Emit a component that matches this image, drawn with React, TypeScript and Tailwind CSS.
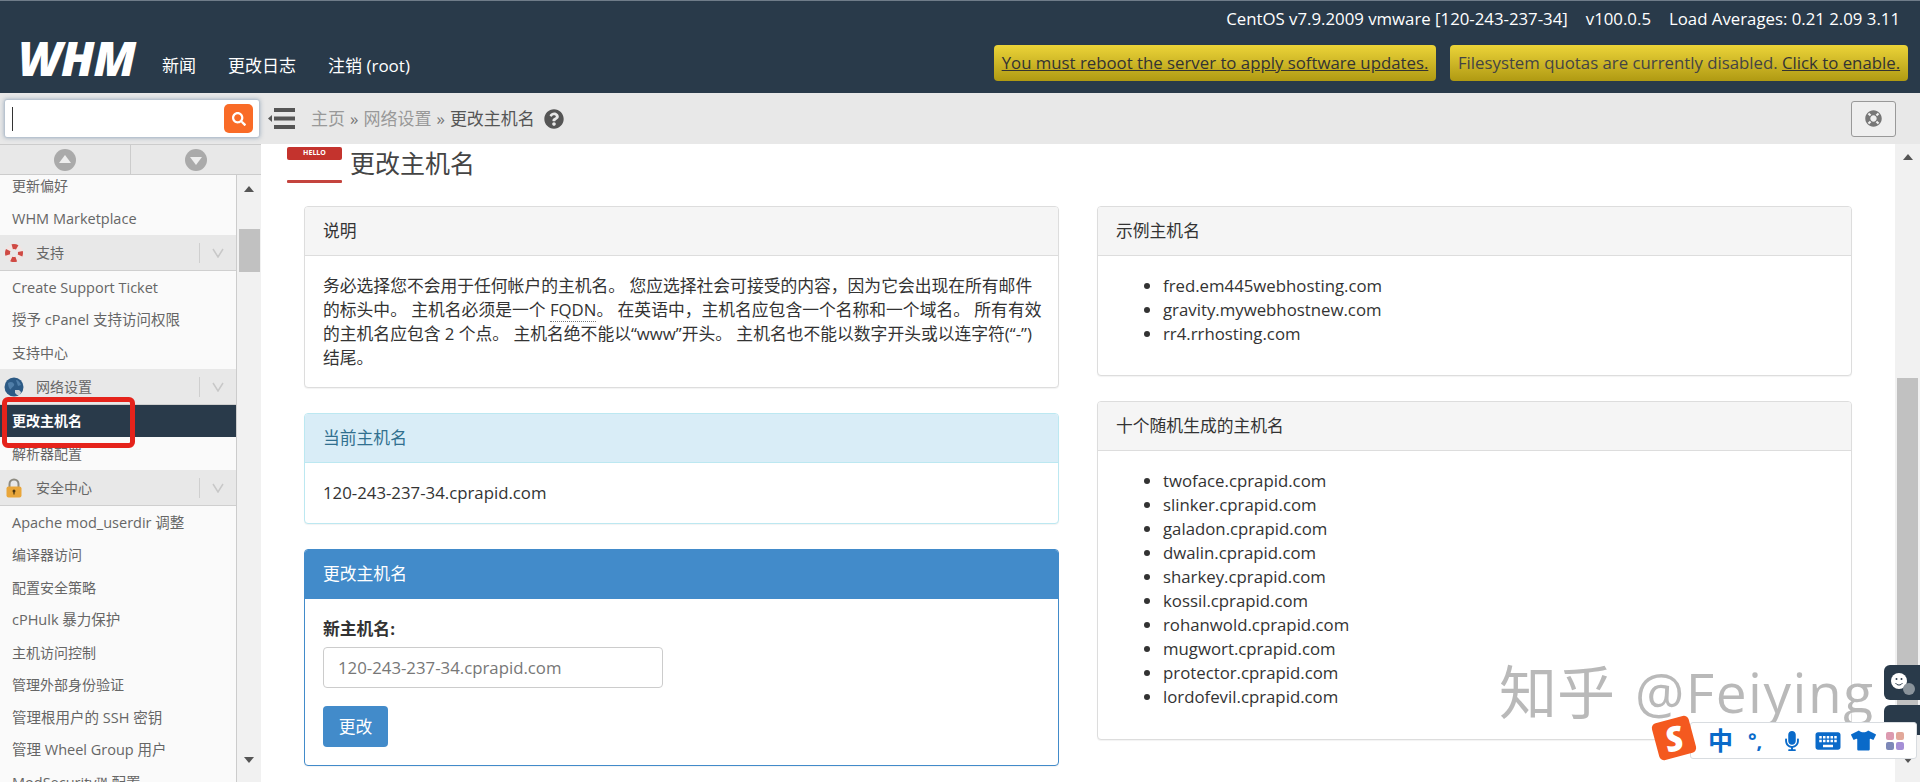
import React from "react";
import { FaMicrophone, FaQuestionCircle, FaTshirt, FaLifeRing, FaSearch } from "react-icons/fa";
import { MdKeyboard } from "react-icons/md";

interface SideRow {
  label: string;
  kind: "item" | "group" | "active";
  icon?: "support" | "network" | "lock";
}

const sideRows: SideRow[] = [
  { label: "更新偏好", kind: "item" },
  { label: "WHM Marketplace", kind: "item" },
  { label: "支持", kind: "group", icon: "support" },
  { label: "Create Support Ticket", kind: "item" },
  { label: "授予 cPanel 支持访问权限", kind: "item" },
  { label: "支持中心", kind: "item" },
  { label: "网络设置", kind: "group", icon: "network" },
  { label: "更改主机名", kind: "active" },
  { label: "解析器配置", kind: "item" },
  { label: "安全中心", kind: "group", icon: "lock" },
  { label: "Apache mod_userdir 调整", kind: "item" },
  { label: "编译器访问", kind: "item" },
  { label: "配置安全策略", kind: "item" },
  { label: "cPHulk 暴力保护", kind: "item" },
  { label: "主机访问控制", kind: "item" },
  { label: "管理外部身份验证", kind: "item" },
  { label: "管理根用户的 SSH 密钥", kind: "item" },
  { label: "管理 Wheel Group 用户", kind: "item" },
  { label: "ModSecurity™ 配置", kind: "item" },
];

const exampleHosts = ["fred.em445webhosting.com", "gravity.mywebhostnew.com", "rr4.rrhosting.com"];
const randomHosts = [
  "twoface.cprapid.com",
  "slinker.cprapid.com",
  "galadon.cprapid.com",
  "dwalin.cprapid.com",
  "sharkey.cprapid.com",
  "kossil.cprapid.com",
  "rohanwold.cprapid.com",
  "mugwort.cprapid.com",
  "protector.cprapid.com",
  "lordofevil.cprapid.com",
];

const GroupIcon = ({ name }: { name?: SideRow["icon"] }) => {
  if (name === "support") {
    return (
      <svg viewBox="0 0 20 20" className="w-[20px] h-[20px]">
        <circle cx="10" cy="10" r="6.5" fill="none" stroke="#f3e4e2" strokeWidth="5" />
        <circle cx="10" cy="10" r="6.5" fill="none" stroke="#cf4a44" strokeWidth="5" strokeDasharray="5.2 5" strokeDashoffset="2.6" />
      </svg>
    );
  }
  if (name === "network") {
    return (
      <svg viewBox="0 0 20 20" className="w-[20px] h-[20px]">
        <circle cx="10" cy="10" r="9.5" fill="#2c5a85" />
        <path d="M4 6c3-2 5-1 6 1s-2 3-3 5-3-3-3-6zM12 3c2 0 4 2 5 5l-3 1z" fill="#4f7ea8" />
        <path d="M11 13l4 0 2 2-1 3-3 0-2-2z" fill="#c9ced3" />
      </svg>
    );
  }
  return (
    <svg viewBox="0 0 20 20" className="w-[20px] h-[20px]">
      <path d="M5.5 9V6a4.5 4.5 0 0 1 9 0v3" fill="none" stroke="#8d8a80" strokeWidth="2" />
      <rect x="2.5" y="8.5" width="15" height="11" rx="2" fill="#e9a63a" />
      <circle cx="10" cy="13" r="1.5" fill="#4a3510" />
      <rect x="9.4" y="13" width="1.2" height="3.5" fill="#4a3510" />
    </svg>
  );
};

const SideRowView = ({ row }: { row: SideRow }) => {
  if (row.kind === "group") {
    return (
      <div className="h-[36.5px] shrink-0 flex items-center bg-[#e8e8e8] border-b border-[#cfcfcf] text-[#666] text-[14px]">
        <div className="w-[36px] pl-[4px]">
          <GroupIcon name={row.icon} />
        </div>
        <span className="flex-1">{row.label}</span>
        <div className="w-[1px] h-[20px] bg-[#cfcfcf]" />
        <svg viewBox="0 0 12 10" className="w-[12px] h-[10px] mx-[12px]">
          <polyline points="1,1 6,9 11,1" fill="none" stroke="#c8c8c8" strokeWidth="1.5" />
        </svg>
      </div>
    );
  }
  if (row.kind === "active") {
    return (
      <div className="h-[32px] shrink-0 flex items-center pl-[12px] bg-[#293a4a] text-white font-semibold text-[14px]">
        {row.label}
      </div>
    );
  }
  // rows holding latin text run a little wider in the picture
  const size = /[A-Za-z]/.test(row.label) ? "text-[14.5px]" : "text-[14px]";
  return (
    <div className={`h-[32.5px] shrink-0 flex items-center pl-[12px] text-[#666] whitespace-nowrap ${size}`}>
      {row.label}
    </div>
  );
};

const ScrollArrow = ({ up }: { up?: boolean }) => (
  <svg viewBox="0 0 12 8" className="w-[12px] h-[8px]">
    <polygon points={up ? "6,1 11,7 1,7" : "1,1 11,1 6,7"} fill="#555" />
  </svg>
);

const Panel = ({
  title,
  children,
  tone = "default",
  bodyClass = "pb-[18px]",
}: {
  title: string;
  children: React.ReactNode;
  tone?: "default" | "info" | "primary";
  bodyClass?: string;
}) => {
  const wrap =
    tone === "info" ? "border-[#bce8f1]" : tone === "primary" ? "border-[#428bca]" : "border-[#ddd]";
  const head =
    tone === "info"
      ? "bg-[#d9edf7] text-[#31708f] border-[#bce8f1]"
      : tone === "primary"
        ? "bg-[#428bca] text-white border-[#428bca]"
        : "bg-[#f5f5f5] text-[#333] border-[#ddd]";
  return (
    <div className={`bg-white border rounded-[4px] overflow-hidden shadow-[0_1px_1px_rgba(0,0,0,0.05)] ${wrap}`}>
      <div className={`h-[49px] flex items-center px-[18px] border-b ${head}`}>{title}</div>
      <div className={`px-[18px] pt-[18px] ${bodyClass}`}>{children}</div>
    </div>
  );
};

const HostList = ({ hosts }: { hosts: string[] }) => (
  <ul className="list-disc pl-[47px]">
    {hosts.map((host) => (
      <li key={host}>{host}</li>
    ))}
  </ul>
);

export default function App() {
  return (
    <div
      className="relative w-[1920px] h-[782px] overflow-hidden bg-white text-[16.8px] leading-[24px] text-[#333]"
      style={{ fontFamily: '"Open Sans", "Noto Sans CJK SC", sans-serif' }}
    >
      {/* Header */}
      <header className="h-[93px] bg-[#293a4a] border-t border-[#6f7c89] flex justify-between">
        <div className="flex items-start pl-[18px] pt-[37px]">
          <span className="w-[126px] text-white text-[47px] leading-[40px] font-extrabold italic tracking-[-1px]">
            WHM
          </span>
          <nav className="flex gap-[32px] ml-[18px] pt-[16px] text-white text-[17px]">
            <span>新闻</span>
            <span>更改日志</span>
            <span>注销 (root)</span>
          </nav>
        </div>
        <div className="flex flex-col items-end pr-[12px] pt-[6px]">
          <div className="flex gap-[18px] pr-[8px] text-white">
            <span>CentOS v7.9.2009 vmware [120-243-237-34]</span>
            <span>v100.0.5</span>
            <span>Load Averages: 0.21 2.09 3.11</span>
          </div>
          <div className="flex gap-[14px] mt-[14px]">
            <div className="h-[36px] w-[442px] flex items-center justify-center rounded-[4px] bg-gradient-to-b from-[#ecd438] to-[#b09a12] text-[#333] underline whitespace-nowrap">
              You must reboot the server to apply software updates.
            </div>
            <div className="h-[36px] w-[458px] flex items-center justify-center rounded-[4px] bg-gradient-to-b from-[#ecd438] to-[#b09a12] text-[#444] whitespace-nowrap">
              Filesystem quotas are currently disabled.&nbsp;<span className="underline text-[#333]">Click to enable.</span>
            </div>
          </div>
        </div>
      </header>

      {/* Search and breadcrumb bar */}
      <div className="h-[51px] bg-[#e8e8e8] flex items-center">
        <div className="ml-[4px] w-[256px] h-[39px] bg-white rounded-[3px] border border-[#b9c4d0] shadow-[0_0_4px_rgba(90,120,150,0.5)] flex items-center justify-between pl-[7px] pr-[6px]">
          <div className="w-[1px] h-[24px] bg-[#333]" />
          <div className="w-[29px] h-[29px] rounded-[5px] bg-[#f96b27] flex items-center justify-center">
            <FaSearch className="text-white text-[14px]" />
          </div>
        </div>
        <svg viewBox="0 0 27 21" className="w-[27px] h-[21px] ml-[8px]">
          <polygon points="0,10.5 4,7 4,14" fill="#555" />
          <rect x="6" y="0" width="21" height="4" fill="#555" />
          <rect x="6" y="8.5" width="21" height="4" fill="#555" />
          <rect x="6" y="17" width="21" height="4" fill="#555" />
        </svg>
        <div className="flex items-center ml-[16px] text-[17px] text-[#999] whitespace-nowrap">
          <span>主页</span>
          <span className="mx-[5px] text-[#777]">»</span>
          <span>网络设置</span>
          <span className="mx-[5px] text-[#777]">»</span>
          <span className="text-[#555]">更改主机名</span>
          <FaQuestionCircle className="ml-[9px] text-[#555] text-[20px]" />
        </div>
        <div className="ml-auto mr-[24px] w-[45px] h-[36px] rounded-[3px] border border-[#999] bg-[#efefef] flex items-center justify-center">
          <FaLifeRing className="text-[#777] text-[17px]" />
        </div>
      </div>

      <div className="flex h-[638px]">
        {/* Sidebar */}
        <aside className="w-[261px] shrink-0 flex flex-col">
          <div className="h-[31px] shrink-0 flex bg-[#e8e8e8] border-y border-[#ccc]">
            <div className="w-[131px] flex items-center justify-center border-r border-[#ccc]">
              <svg viewBox="0 0 22 22" className="w-[22px] h-[22px]">
                <circle cx="11" cy="11" r="11" fill="#aaa" />
                <polygon points="11,6 17,14 5,14" fill="#eee" />
              </svg>
            </div>
            <div className="flex-1 flex items-center justify-center">
              <svg viewBox="0 0 22 22" className="w-[22px] h-[22px]">
                <circle cx="11" cy="11" r="11" fill="#aaa" />
                <polygon points="5,8 17,8 11,16" fill="#eee" />
              </svg>
            </div>
          </div>
          <div className="flex-1 flex overflow-hidden">
            <div className="w-[237px] bg-[#fafafa] border-r border-[#ccc] overflow-hidden">
              <div className="-mt-[5.2px] flex flex-col">
                {sideRows.map((row) => (
                  <SideRowView key={row.label} row={row} />
                ))}
              </div>
            </div>
            <div className="flex-1 bg-[#f1f1f1] flex flex-col items-center">
              <div className="h-[28px] flex items-center">
                <ScrollArrow up />
              </div>
              <div className="w-[21px] h-[43px] mt-[26px] bg-[#c1c1c1]" />
              <div className="mt-auto h-[26px]">
                <ScrollArrow />
              </div>
            </div>
          </div>
        </aside>

        {/* Main content */}
        <main className="flex-1 min-w-0 overflow-hidden pl-[26px]">
          <div className="h-[62px] flex items-start pt-[3px]">
            <svg viewBox="0 0 55 36" className="w-[55px] h-[36px]">
              <rect x="0" y="0" width="55" height="13" rx="2" fill="#c4332d" />
              <text x="27.5" y="8" textAnchor="middle" fontSize="7" fontWeight="700" fill="#fff">HELLO</text>
              <rect x="0" y="13" width="55" height="20" fill="#fff" />
              <rect x="0" y="33" width="55" height="3" rx="1" fill="#c4443e" />
            </svg>
            <h1 className="ml-[8px] text-[25px] leading-[32px] text-[#444]">更改主机名</h1>
          </div>
          <div className="flex gap-[38px] pl-[17px]">
            <div className="w-[755px] flex flex-col gap-[25px]">
              <Panel title="说明" bodyClass="pb-[17px]">
                <p className="-mr-[12px] whitespace-nowrap">
                  务必选择您不会用于任何帐户的主机名。 您应选择社会可接受的内容&#xFF0C;因为它会出现在所有邮件
                  <br />
                  的标头中。 主机名必须是一个 <abbr className="no-underline border-b border-dotted border-[#777]">FQDN</abbr>。 在英语中&#xFF0C;主机名应包含一个名称和一个域名。 所有有效
                  <br />
                  的主机名应包含 2 个点。 主机名绝不能以“www”开头。 主机名也不能以数字开头或以连字符(“-”)
                  <br />
                  结尾。
                </p>
              </Panel>
              <Panel title="当前主机名" tone="info">
                120-243-237-34.cprapid.com
              </Panel>
              <Panel title="更改主机名" tone="primary">
                <label className="block font-bold mb-[6px]">新主机名:</label>
                <div className="w-[340px] h-[41px] border border-[#ccc] rounded-[4px] flex items-center px-[14px] text-[#777]">
                  120-243-237-34.cprapid.com
                </div>
                <button className="block mt-[18px] w-[65px] h-[41px] rounded-[4px] bg-[#428bca] text-white">更改</button>
              </Panel>
            </div>
            <div className="w-[755px] flex flex-col gap-[25px]">
              <Panel title="示例主机名" bodyClass="pb-[29px]">
                <HostList hosts={exampleHosts} />
              </Panel>
              <Panel title="十个随机生成的主机名" bodyClass="pb-[30px]">
                <HostList hosts={randomHosts} />
              </Panel>
            </div>
          </div>
        </main>

        {/* Page scrollbar */}
        <div className="w-[25px] shrink-0 bg-[#f1f1f1] flex flex-col items-center">
          <div className="h-[26px] flex items-center">
            <ScrollArrow up />
          </div>
          <div className="w-[21px] h-[344px] mt-[208px] bg-[#c1c1c1]" />
          <div className="mt-auto h-[26px]">
            <ScrollArrow />
          </div>
        </div>
      </div>

      {/* Red annotation around the selected menu entry */}
      <div className="absolute left-[2px] top-[397px] w-[133px] h-[51px] rounded-[6px] border-[5px] border-[#e5231b]" />

      {/* Watermark */}
      <div className="absolute left-[1499px] top-[652px] flex items-center gap-[20px] text-[#8a8a8a]/60 whitespace-nowrap pointer-events-none [text-shadow:0_0_2px_rgba(255,255,255,0.9)]">
        <span className="text-[58px] leading-[80px] font-normal">知乎</span>
        <span className="text-[55px] leading-[80px] tracking-[1.5px]">@Feiying</span>
      </div>

      {/* Floating feedback widget */}
      <div className="absolute left-[1884px] top-[665px] w-[36px] h-[35px] rounded-l-[6px] bg-[#293a4a] flex items-center justify-center">
        <svg viewBox="0 0 30 28" className="w-[30px] h-[28px]">
          <circle cx="12" cy="12" r="8" fill="#fff" />
          <circle cx="9.5" cy="10" r="1" fill="#293a4a" />
          <circle cx="14.5" cy="10" r="1" fill="#293a4a" />
          <path d="M8.5 14a4 4 0 0 0 7 0" fill="none" stroke="#293a4a" strokeWidth="1" />
          <circle cx="22" cy="20" r="6" fill="#8a939b" />
        </svg>
      </div>
      <div className="absolute left-[1884px] top-[705px] w-[36px] h-[30px] rounded-l-[6px] bg-[#293a4a]" />

      {/* IME toolbar */}
      <div className="absolute left-[1690px] top-[722px] w-[227px] h-[37px] bg-white border border-[#d8dce0] rounded-[3px] flex items-center text-[#0a6ac9]">
        <span className="absolute left-[17px] text-[25px] font-bold leading-[35px]">中</span>
        <span className="absolute left-[57px] text-[20px] font-bold leading-[30px]">°,</span>
        <FaMicrophone className="absolute left-[91px] top-[8px] text-[20px]" />
        <MdKeyboard className="absolute left-[122px] top-[3px] text-[30px]" />
        <FaTshirt className="absolute left-[160px] top-[5px] text-[25px]" />
        <div className="absolute left-[195px] top-[9px] grid grid-cols-2 gap-[2px]">
          <div className="w-[8px] h-[8px] rounded-[2px] bg-[#dc9ab0]" />
          <div className="w-[8px] h-[8px] rounded-[2px] bg-[#e2a89a]" />
          <div className="w-[8px] h-[8px] rounded-[2px] bg-[#7d88b8]" />
          <div className="w-[8px] h-[8px] rounded-[2px] bg-[#a58fd6]" />
        </div>
      </div>
      <div className="absolute left-[1655px] top-[719px] w-[38px] h-[38px] rounded-[5px] bg-[#f4591f] -rotate-[15deg] flex items-center justify-center text-white text-[34px] font-extrabold italic leading-none">
        S
      </div>
    </div>
  );
}
